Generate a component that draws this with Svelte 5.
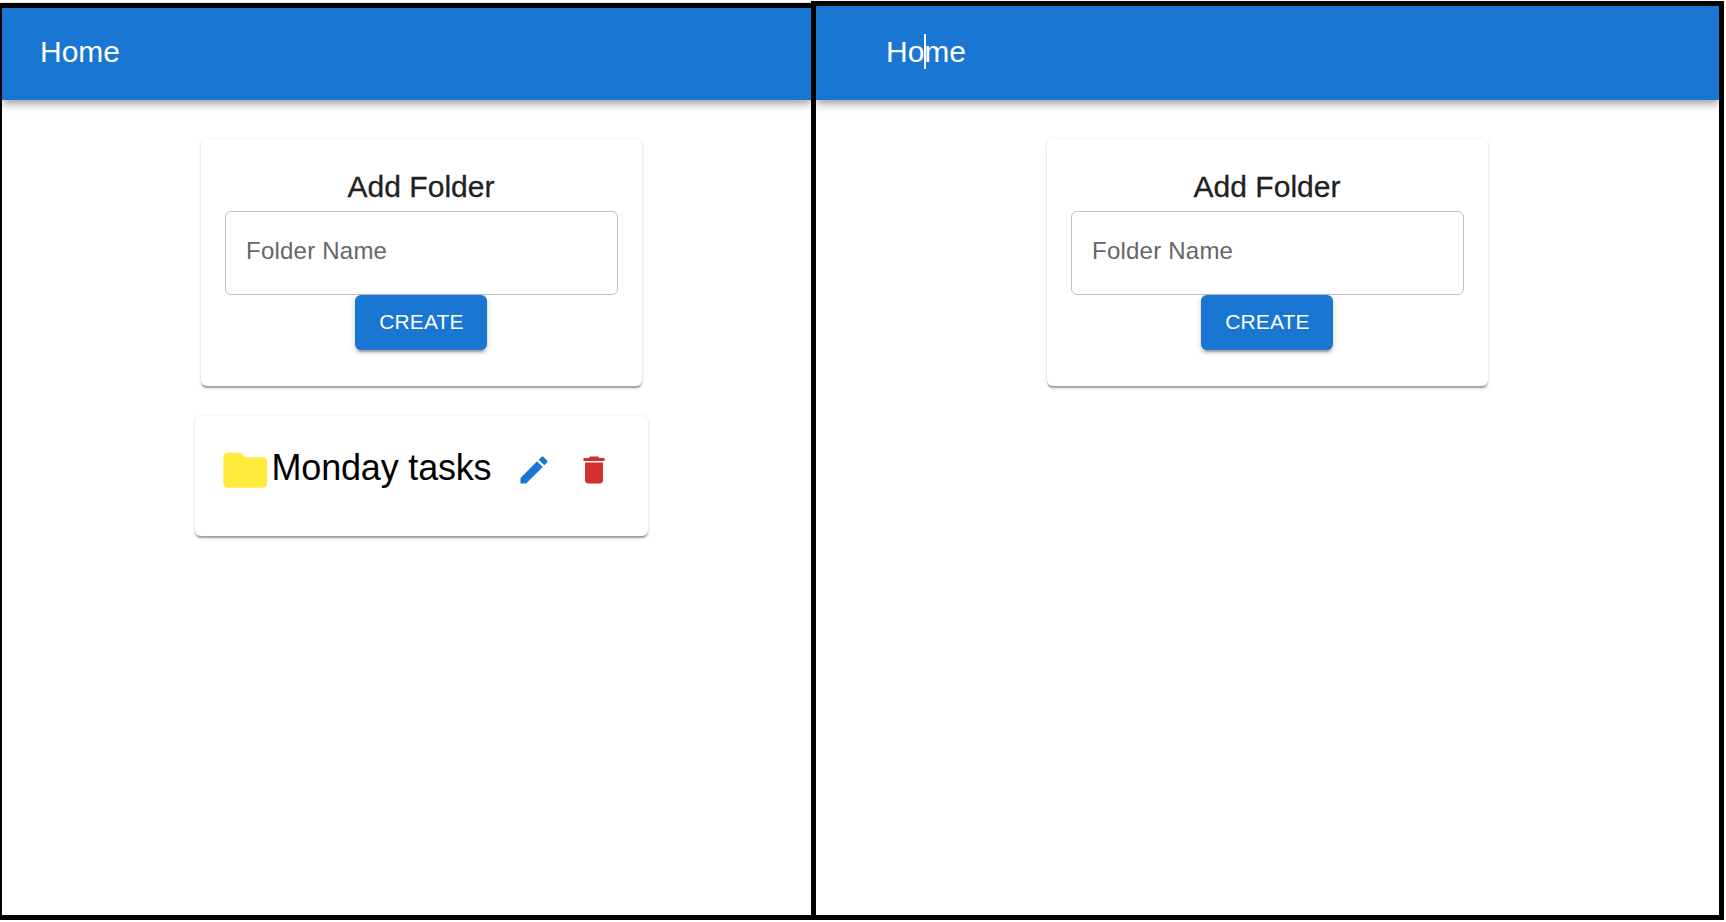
<script>
  const folders = ['Monday tasks'];
</script>

{#snippet addFolder()}
  <section class="card form">
    <h1>Add Folder</h1>
    <div class="field">Folder Name</div>
    <button class="create">CREATE</button>
  </section>
{/snippet}

<main>
  <div class="screen first">
    <header><span class="home">Home</span></header>
    <div class="content">
      {@render addFolder()}
      {#each folders as name}
        <section class="card folder">
          <svg class="folder-icon" viewBox="0 0 24 24"><path d="M10 4H4c-1.100 0-1.990.9-1.990 2L2 18c0 1.100.9 2 2 2h16c1.100 0 2-.9 2-2V8c0-1.100-.9-2-2-2h-8l-2-2z" /></svg>
          <span class="name">{name}</span>
          <button class="icon edit" aria-label="Edit">
            <svg viewBox="0 0 24 24"><path d="M3 17.250V21h3.750L17.810 9.940l-3.750-3.750L3 17.250zM20.710 7.040c.39-.39.39-1.020 0-1.410l-2.340-2.340c-.39-.39-1.020-.39-1.410 0l-1.830 1.830 3.750 3.750 1.830-1.830z" /></svg>
          </button>
          <button class="icon delete" aria-label="Delete">
            <svg viewBox="0 0 24 24"><path d="M6 19c0 1.100.9 2 2 2h8c1.100 0 2-.9 2-2V7H6v12zM19 4h-3.500l-1-1h-5l-1 1H5v2h14V4z" /></svg>
          </button>
        </section>
      {/each}
    </div>
  </div>
  <div class="screen second">
    <header><span class="home">Home<i class="cursor"></i></span></header>
    <div class="content">
      {@render addFolder()}
    </div>
  </div>
</main>

<style>
  :global(body) {
    background: #fff;
  }
  main {
    display: flex;
    width: 1726px;
    height: 922px;
    overflow: hidden;
    font-family: 'Liberation Sans', Arial, sans-serif;
  }
  main * {
    box-sizing: border-box;
  }
  .screen {
    flex: none;
    overflow: hidden;
    border: 5px solid #000;
    background: #fff;
  }
  .first {
    width: 811px;
    height: 917px;
    margin-top: 3px;
    border-width: 5px 0 5px 2px;
    box-shadow: 0 -1px 0 #ddd;
  }
  .second {
    width: 913px;
    height: 919px;
    margin-top: 1px;
  }
  header {
    display: flex;
    align-items: center;
    height: 92px;
    padding: 0 0 4px 38px;
    background: #1976d2;
    color: #fff;
    box-shadow:
      0 3px 6px -1.5px rgba(0, 0, 0, 0.2),
      0 6px 7.5px 0 rgba(0, 0, 0, 0.14),
      0 1.5px 15px 0 rgba(0, 0, 0, 0.12);
  }
  .second header {
    height: 94px;
    padding: 0 0 2px 70px;
  }
  .home {
    position: relative;
    font-size: 30px;
    line-height: 48px;
    letter-spacing: 0;
  }
  .cursor {
    position: absolute;
    left: 38px;
    top: 6px;
    width: 2px;
    height: 35px;
    background: #fff;
  }
  .content {
    display: flex;
    flex-direction: column;
    align-items: center;
    width: 453px;
    margin: 39px 0 0 193px;
    gap: 30px;
  }
  .second .content {
    margin-left: 225px;
  }
  .card {
    border-radius: 6px;
    background: #fff;
    box-shadow:
      0 3px 1.5px -1.5px rgba(0, 0, 0, 0.2),
      0 1.5px 1.5px 0 rgba(0, 0, 0, 0.14),
      0 1.5px 4.5px 0 rgba(0, 0, 0, 0.12);
  }
  .form {
    display: flex;
    flex-direction: column;
    align-items: center;
    width: 441px;
    height: 247px;
    padding: 24px;
  }
  h1 {
    margin: 0;
    padding-right: 1px;
    color: #212121;
    font-size: 30px;
    font-weight: 400;
    line-height: 48px;
    letter-spacing: 0.05px;
    -webkit-text-stroke: 0.3px #212121;
  }
  .field {
    flex: none;
    width: 393px;
    height: 84px;
    padding: 21px 20px;
    border: 1px solid #c0c0c0;
    border-radius: 6px;
    color: #666;
    font-size: 24px;
    line-height: 36px;
    letter-spacing: 0.225px;
  }
  button {
    border: 0;
    font-family: inherit;
  }
  .create {
    flex: none;
    width: 132px;
    height: 55px;
    margin-right: 1px;
    padding: 0 0 2px 1px;
    border-radius: 6px;
    background: #1976d2;
    color: #fff;
    font-size: 21px;
    letter-spacing: 0.15px;
    box-shadow:
      0 4.5px 1.5px -3px rgba(0, 0, 0, 0.2),
      0 3px 3px 0 rgba(0, 0, 0, 0.14),
      0 1.5px 7.5px 0 rgba(0, 0, 0, 0.12);
  }
  .folder {
    display: flex;
    align-items: center;
    width: 453px;
    height: 120px;
    padding: 0 24px 12px;
  }
  svg {
    display: block;
    fill: currentColor;
  }
  .folder-icon {
    width: 52.5px;
    height: 52.5px;
    flex: none;
    color: #ffeb3b;
  }
  .name {
    flex: 1;
    font-size: 36px;
    line-height: 42px;
    padding-bottom: 5px;
    letter-spacing: -0.18px;
    white-space: nowrap;
  }
  .icon {
    flex: none;
    padding: 12px;
    background: none;
  }
  .icon svg {
    width: 36px;
    height: 36px;
  }
  .edit {
    color: #1976d2;
  }
  .delete {
    color: #d32f2f;
  }
</style>
